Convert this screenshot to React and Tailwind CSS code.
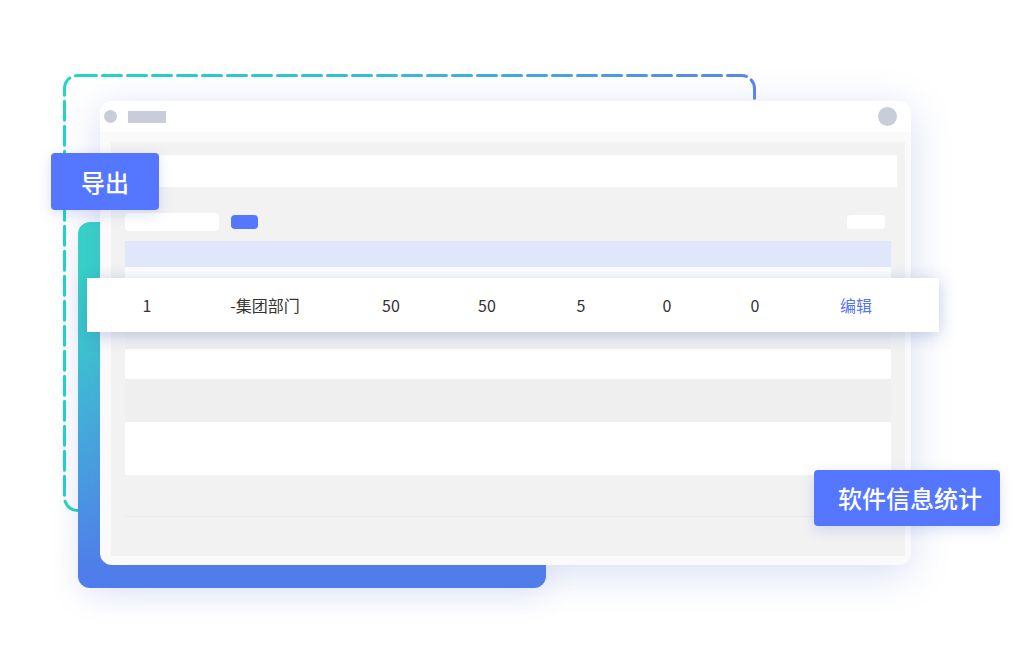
import React from "react";

const cells = [
  { text: "1", w: "w-[120px]" },
  { text: "-集团部门", w: "w-[116px]" },
  { text: "50", w: "w-[136px]" },
  { text: "50", w: "w-[56px]" },
  { text: "5", w: "w-[132px]" },
  { text: "0", w: "w-[40px]" },
  { text: "0", w: "w-[136px]" },
];

export default function App() {
  return (
    <div
      className="relative w-[1028px] h-[668px] overflow-hidden bg-white"
      style={{ fontFamily: '"Noto Sans CJK SC", "Noto Sans", sans-serif' }}
    >
      {/* dashed outline */}
      <svg className="absolute left-0 top-0" width="1028" height="668">
        <defs>
          <linearGradient id="dash" gradientUnits="userSpaceOnUse" x1="64" y1="0" x2="755" y2="0">
            <stop offset="0" stopColor="#22d6c3" />
            <stop offset="0.45" stopColor="#34c0d6" />
            <stop offset="1" stopColor="#5b84ef" />
          </linearGradient>
        </defs>
        <rect
          x="64.5"
          y="75.5"
          width="690"
          height="435"
          rx="13"
          fill="none"
          stroke="url(#dash)"
          strokeWidth="3"
          strokeDasharray="19 6"
          strokeLinecap="round"
        />
      </svg>

      {/* gradient panel */}
      <div className="absolute left-[78px] top-[222px] w-[468px] h-[366px] rounded-xl bg-gradient-to-b from-[#36d4c8] from-20% to-[#4f7eec] to-95% shadow-[0_10px_30px_rgba(80,110,200,0.12)]" />

      {/* window */}
      <div className="absolute left-[100px] top-[101px] w-[811px] h-[464px] rounded-xl bg-[#fafafa] shadow-[0_8px_40px_rgba(90,115,200,0.24)] flex flex-col">
        <div className="h-[31px] shrink-0 bg-white rounded-t-xl flex items-center pl-[4px] pr-[14px]">
          <div className="w-[13px] h-[13px] rounded-full bg-[#c9cdda]" />
          <div className="ml-[11px] w-[38px] h-[12px] bg-[#c9cdda]" />
          <div className="ml-auto w-[19px] h-[19px] rounded-full bg-[#c9cdda]" />
        </div>
        <div className="ml-[11px] mr-[6px] mt-[10px] h-[414px] bg-[#f2f2f2] flex flex-col pl-[14px]">
          <div className="mt-[13px] mr-[8px] h-[32px] bg-white" />
          <div className="mt-[26px] h-[18px] flex items-center pr-[20px]">
            <div className="w-[94px] h-[18px] rounded-sm bg-white" />
            <div className="ml-[12px] w-[27px] h-[14px] rounded-sm bg-[#5577ff]" />
            <div className="ml-auto w-[38px] h-[14px] rounded-sm bg-white" />
          </div>
          <div className="mt-[10px] mr-[14px] flex flex-col">
            <div className="h-[26px] bg-[#e1e7fb]" />
            <div className="h-[30px] bg-white" />
            <div className="h-[52px] bg-[#f0f0f0]" />
            <div className="h-[30px] bg-white" />
            <div className="h-[43px] bg-[#efefef]" />
            <div className="h-[53px] bg-white" />
            <div className="h-[42px] border-b border-[#ebebeb]" />
          </div>
        </div>
      </div>

      {/* floating row */}
      <div className="absolute left-[87px] top-[278px] w-[852px] h-[54px] bg-white shadow-[0_3px_16px_rgba(60,90,170,0.3)] flex items-center text-[16px] text-[#333333]">
        {cells.map((c, i) => (
          <div key={i} className={`${c.w} shrink-0 text-center`}>
            {c.text}
          </div>
        ))}
        <div className="w-[66px] shrink-0 text-center text-[#5576f4]">编辑</div>
      </div>

      {/* tags */}
      <div className="absolute left-[51px] top-[153px] w-[108px] h-[57px] rounded bg-[#5576ff] shadow-[0_4px_14px_rgba(60,90,200,0.18)] flex items-center justify-center text-white text-[24px] font-medium">
        导出
      </div>
      <div className="absolute left-[814px] top-[470px] w-[186px] h-[56px] rounded bg-[#5576ff] shadow-[0_4px_14px_rgba(60,90,200,0.18)] flex items-center pl-[24px] text-white text-[24px] font-medium">
        软件信息统计
      </div>
    </div>
  );
}
